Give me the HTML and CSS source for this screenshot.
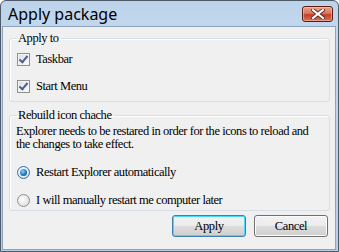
FILE: index.html
```html
<!DOCTYPE html>
<html lang="en">

<head>
    <meta charset="UTF-8">
    <title>Apply package</title>
    <link rel="stylesheet" href="styles.css">
</head>

<body>

    <div class="window">
        <!-- Titulek okna -->
        <div class="titlebar">
            <span class="title">Apply package</span>
            <button class="close-btn" aria-label="Close">
                <svg width="14" height="10" viewBox="0 0 14 10">
                    <path d="M2 1 L12 9 M12 1 L2 9" stroke="#4a1a12" stroke-width="3.6" stroke-linecap="square"/>
                    <path d="M2 1 L12 9 M12 1 L2 9" stroke="#ffffff" stroke-width="2.2" stroke-linecap="square"/>
                </svg>
            </button>
        </div>

        <div class="client">
            <!-- Apply to -->
            <fieldset class="group group-apply">
                <legend>Apply to</legend>
                <label class="option"><span class="check checked"></span>Taskbar</label>
                <label class="option"><span class="check checked"></span>Start Menu</label>
            </fieldset>

            <!-- Rebuild icon cache -->
            <fieldset class="group group-rebuild">
                <legend>Rebuild icon chache</legend>
                <p class="note">Explorer needs to be restared in order for the icons to reload and the changes to take effect.</p>
                <label class="option"><span class="radio selected"></span>Restart Explorer automatically</label>
                <label class="option"><span class="radio"></span>I will manually restart me computer later</label>
            </fieldset>

            <div class="buttons">
                <button class="btn default">Apply</button>
                <button class="btn">Cancel</button>
            </div>
        </div>
    </div>

</body>

</html>
```

FILE: styles.css
```css
body {
    margin: 0;
    padding: 0;
    background: #ffffff;
    font-family: "Liberation Serif", serif;
    font-size: 12.5px;
    letter-spacing: -0.45px;
    color: #000000;
}

.window {
    width: 339px;
    height: 252px;
    box-sizing: border-box;
    border: 1px solid #4d5a68;
    border-radius: 6px 6px 0 0;
    background: linear-gradient(to bottom, #bcd3ea, #c3d8ee 30px, #b4ceea);
    display: flex;
    flex-direction: column;
}

/* Titulek */
.titlebar {
    height: 25px;
    display: flex;
    align-items: flex-start;
    justify-content: space-between;
    padding: 0 5px 0 7px;
}

.title {
    font-family: "Noto Sans", sans-serif;
    font-size: 16px;
    letter-spacing: 0;
    line-height: 16px;
    margin-top: 5px;
    color: #000000;
}

.close-btn {
    width: 31px;
    height: 16px;
    margin-top: 5px;
    padding: 0;
    border: 1px solid #5a1d12;
    border-radius: 3px;
    background: linear-gradient(to bottom, #eaa08c, #d77761 45%, #c43f25 55%, #d8735a);
    display: flex;
    align-items: center;
    justify-content: center;
    box-shadow: inset 0 0 0 1px rgba(255, 210, 200, 0.5);
}

/* Obsah */
.client {
    flex: 1;
    margin: 0 2px 1px 1px;
    border: 1px solid #8ea4bd;
    background: #f0f0f0;
    padding: 5px 5px 0 6px;
    display: flex;
    flex-direction: column;
}

.group {
    margin: 0;
    border: 1px solid #d5dfe5;
    border-radius: 3px;
    box-shadow: inset 1px 1px 0 #ffffff;
    padding: 0 8px 0 7px;
}

.group legend {
    padding: 0 2px 0 1px;
    margin-left: 0;
    line-height: 13px;
}

.group-apply {
    height: 70px;
    box-sizing: border-box;
    padding-top: 1px;
}

.group-rebuild {
    margin-top: 7px;
    height: 102px;
    box-sizing: border-box;
}

.option {
    display: flex;
    align-items: center;
    height: 27px;
    gap: 6px;
}

.group-rebuild .option {
    height: 28px;
}

.note {
    margin: 3px 0 7px -1px;
    line-height: 13px;
}

/* Zaškrtávací políčko */
.check {
    width: 11px;
    height: 11px;
    border: 1px solid #8f8f8f;
    background: linear-gradient(135deg, #dcdcdc, #ffffff);
    box-shadow: inset 0 0 0 1px #f4f4f4;
    position: relative;
}

.check.checked::after {
    content: "";
    position: absolute;
    left: 3px;
    top: 0px;
    width: 3px;
    height: 7px;
    border: solid #4a5f97;
    border-width: 0 2px 2px 0;
    transform: rotate(40deg);
}

/* Přepínač */
.radio {
    width: 11px;
    height: 11px;
    border: 1px solid #8f8f8f;
    border-radius: 50%;
    background: radial-gradient(circle at 40% 40%, #ffffff, #d4d4d4);
    position: relative;
}

.radio.selected {
    border-color: #2b6ea5;
    background: radial-gradient(circle at 40% 40%, #ffffff, #c5e1f3);
}

.radio.selected::after {
    content: "";
    position: absolute;
    left: 2px;
    top: 2px;
    width: 7px;
    height: 7px;
    border-radius: 50%;
    background: radial-gradient(circle at 40% 35%, #8fd0f5, #1c6fb8 60%, #0f4e8c);
}

/* Tlačítka */
.buttons {
    display: flex;
    justify-content: flex-end;
    gap: 8px;
    margin-top: 4px;
    padding-right: 2px;
}

.btn {
    width: 74px;
    height: 22px;
    padding: 0;
    font-family: "Liberation Serif", serif;
    font-size: 12.5px;
    letter-spacing: -0.4px;
    color: #000000;
    border: 1px solid #707070;
    border-radius: 3px;
    background: linear-gradient(to bottom, #f2f2f2, #ebebeb 50%, #dddddd 51%, #cfcfcf);
    box-shadow: inset 0 0 0 1px #fcfcfc;
}

.btn.default {
    border-color: #3c7fb1;
    box-shadow: inset 0 0 0 1px #48d8f8;
}
```
